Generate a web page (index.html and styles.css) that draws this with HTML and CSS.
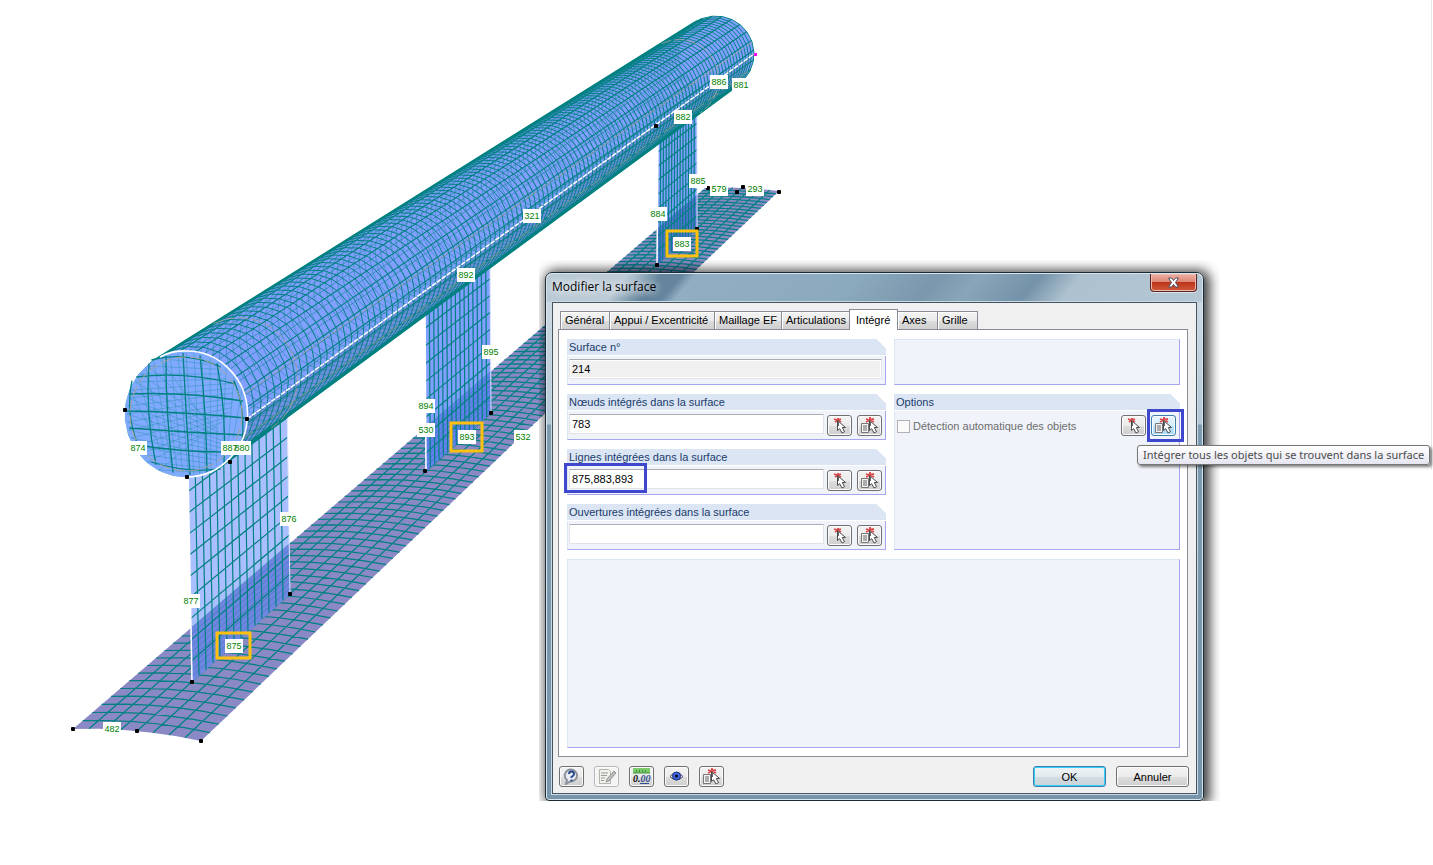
FILE: index.html
```html
<!DOCTYPE html>
<html lang="fr">
<head>
<meta charset="utf-8">
<title>Modifier la surface</title>
<link rel="stylesheet" href="styles.css">
</head>
<body>
<svg class="defs" width="0" height="0" aria-hidden="true">
  <symbol id="pick" viewBox="0 0 21 17">
    <path d="M5 2l3 1 4-1M6 5l3-2 3 2M9 1v3" stroke="#dc4a4a" stroke-width="1.800"/>
    <path d="M8.500 3.500v10l2.200-1.800 2.300 4.300 2.500-1.300-2.200-4.200h3.200z" fill="#fff" stroke="#4a4a4a"/>
    <path d="M9.500 4v5" stroke="#666"/>
  </symbol>
  <symbol id="picklist" viewBox="0 0 21 17">
    <path d="M2.500 6.500h7v9h-7z" fill="#f4f4f4" stroke="#777"/>
    <path d="M4 9h4M4 11h4M4 13h4" stroke="#666"/>
    <path d="M7 2l3 1 5-1M7 5l4-2 4 2M11 0v4" stroke="#dc4a4a" stroke-width="1.800"/>
    <path d="M10.500 3.500v10l2.200-1.800 2.300 4.300 2.500-1.300-2.200-4.200h3.200z" fill="#fff" stroke="#4a4a4a"/>
    <path d="M11.500 4v5" stroke="#666"/>
  </symbol>
</svg>
<main class="stage">
  <svg class="model" id="model" viewBox="0 0 800 800" role="img" aria-label="Maillage du modèle"></svg>

  <section class="dialog" role="dialog" aria-labelledby="title">
    <header class="titlebar">
      <h1 id="title">Modifier la surface</h1>
      <button class="close" aria-label="Fermer"><svg width="13" height="11" viewBox="0 0 13 11"><path d="M1.500 1h3l2 2.500 2-2.500h3L8.500 5.500l3 4.500h-3l-2-2.500-2 2.500h-3l3-4.500z" fill="#fff" stroke="#4b5063"/></svg></button>
    </header>
    <div class="client">
      <nav class="tabs" role="tablist">
        <button class="tab" role="tab">Général</button>
        <button class="tab" role="tab">Appui / Excentricité</button>
        <button class="tab" role="tab">Maillage EF</button>
        <button class="tab" role="tab">Articulations</button>
        <button class="tab active" role="tab" aria-selected="true">Intégré</button>
        <button class="tab short" role="tab">Axes</button>
        <button class="tab short" role="tab">Grille</button>
      </nav>
      <div class="panel">
        <div class="group">
          <label class="head" for="f1">Surface n°</label>
          <div class="row"><input class="field" id="f1" value="214" readonly></div>
        </div>
        <div class="box"></div>
        <div class="group">
          <label class="head" for="f2">Nœuds intégrés dans la surface</label>
          <div class="row"><input class="field" id="f2" value="783">
            <button class="tool" aria-label="Sélectionner"><svg><use href="#pick"/></svg></button>
            <button class="tool" aria-label="Liste"><svg><use href="#picklist"/></svg></button></div>
        </div>
        <div class="group options">
          <div class="head">Options</div>
          <div class="row">
            <input class="check" type="checkbox" id="auto" disabled><label class="muted" for="auto">Détection automatique des objets</label>
            <button class="tool" aria-label="Sélectionner"><svg><use href="#pick"/></svg></button>
            <button class="tool hot" aria-label="Intégrer tous les objets" aria-describedby="tip"><svg><use href="#picklist"/></svg></button>
          </div>
        </div>
        <div class="group marked">
          <label class="head" for="f3">Lignes intégrées dans la surface</label>
          <div class="row"><input class="field" id="f3" value="875,883,893">
            <button class="tool" aria-label="Sélectionner"><svg><use href="#pick"/></svg></button>
            <button class="tool" aria-label="Liste"><svg><use href="#picklist"/></svg></button></div>
        </div>
        <div class="group">
          <label class="head" for="f4">Ouvertures intégrées dans la surface</label>
          <div class="row"><input class="field" id="f4" value="">
            <button class="tool" aria-label="Sélectionner"><svg><use href="#pick"/></svg></button>
            <button class="tool" aria-label="Liste"><svg><use href="#picklist"/></svg></button></div>
        </div>
        <div class="box large"></div>
      </div>
      <footer class="footer">
        <button class="tool" aria-label="Aide"><svg viewBox="0 0 21 17"><path d="M10 1.500a6.500 6 0 1 1-1 12L5 16l1-4A6.500 6 0 0 1 10 1.500z" fill="#e9edf3" stroke="#8b929c" stroke-width="2"/><path d="M8 6q0-2.500 2.500-2.500T13 6q0 1.500-2.500 3v1M10.500 11.500v2" fill="none" stroke="#2b4a8c" stroke-width="2"/></svg></button>
        <button class="tool" aria-label="Commentaire" disabled><svg viewBox="0 0 21 17"><path d="M3.500 1.500h9l2 2v12h-11z" fill="#f1f1ec" stroke="#b4b4ac"/><path d="M5 5h7M5 7.500h6M5 10h4M5 12.500h3" stroke="#999"/><path d="M18 3l-7 8-1 3 3-1 7-8z" fill="#bbb" stroke="#999"/></svg></button>
        <button class="tool" aria-label="Unités"><svg viewBox="0 0 21 17"><path d="M2 0h17v5H2z" fill="#7ccb6b"/><path d="M5.500 2v2M8.500 2v2M11.500 2v2M14.500 2v2M2 5h17" stroke="#3b8f3b"/><path d="M9 15.500h9" stroke="#35518c"/><text x="2" y="14" font-size="10" font-weight="bold" font-style="italic" font-family="Liberation Serif, serif">0.<tspan fill="#35518c">00</tspan></text></svg></button>
        <button class="tool" aria-label="Vue"><svg viewBox="0 0 21 17"><path d="M4 8.500q6.500-8 13 0-6.500 7-13 0z" fill="#eef" stroke="#445" stroke-width="1"/><circle cx="10.500" cy="8" r="4" fill="#4068e0" stroke="#203080"/><circle cx="10.500" cy="8" r="1.500" fill="#001"/></svg></button>
        <button class="tool" aria-label="Liste"><svg><use href="#picklist"/></svg></button>
        <span class="spacer"></span>
        <button class="push default">OK</button>
        <button class="push">Annuler</button>
      </footer>
    </div>
  </section>
  <div class="tooltip" id="tip" role="tooltip">Intégrer tous les objets qui se trouvent dans la surface</div>
</main>
<script src="model.js"></script>
</body>
</html>
```

FILE: styles.css
```css
*, *::before, *::after { box-sizing: border-box; }
body { margin: 0; background: #fff; font: 11px "Liberation Sans", Arial, sans-serif; color: #000; }
button, input { font: inherit; color: inherit; margin: 0; }
.defs { position: absolute; }
.stage { position: relative; min-height: 860px; overflow: hidden; }
.stage::after { content: ""; position: absolute; top: 0; right: 1px; width: 1px; height: 470px; background: #e8e8e8; }
.model { display: block; width: 800px; }

.dialog {
  position: absolute; left: 545px; top: 272px; width: 659px;
  padding: 0 6px 6px; border: 1px solid #1c2a33; border-radius: 7px 7px 4px 4px;
  background: linear-gradient(#d2dde6 0, #b4c7d5 150px, #b4c7d5 151px, #7e9bb0 152px, #7795aa);
  box-shadow: inset 0 0 0 1px #d6e5ef, 3px 1px 12px 3px rgba(0, 0, 0, .75);
  clip-path: inset(-12px -16px 0 -6px);
}
.titlebar {
  display: flex; justify-content: space-between; align-items: flex-start; height: 28px; margin: 1px -5px 0;
  border-radius: 6px 6px 0 0;
  background: linear-gradient(130deg, #b9c9d5 0, #bccbd6 12%, #64859d 17%, #64859d 20%, #91adc2 22%, #8caabe 46%, #7a97ad 58%, #89a5b9 64%, #7492a9 73%, #adc1cf 79%, #b5c7d4);
}
.titlebar h1 { margin: 0; padding: 0 5px; font: 12px/26px "Open Sans", "Noto Sans", sans-serif; text-shadow: 0 0 8px #fff, 0 0 8px #fff; }
.close {
  width: 47px; height: 18px; margin-right: 5px; padding: 0; display: grid; place-items: center;
  border: 1px solid #5a2320; border-top: 0; border-radius: 0 0 4px 4px;
  background: linear-gradient(#efb1a4, #dd8777 45%, #bd3419 50%, #cf5b3b);
  box-shadow: inset 0 0 0 1px #eeb9ae, 0 1px #d9e3eb;
}
.client { padding: 6px 8px 6px 5px; border: 1px solid #45545e; outline: 1px solid #c9dae4; background: #f0f0f0; }
.tabs { display: flex; align-items: flex-end; height: 20px; padding-left: 2px; }
.tab {
  height: 18px; padding: 0 4px; white-space: nowrap; text-align: left; line-height: 17px;
  border: 1px solid #898c95; border-bottom: 0; margin-right: -1px;
  background: linear-gradient(#f3f3f3, #ebebeb 50%, #dcdcdc 51%, #d0d0d0); box-shadow: inset 1px 1px #fff;
}
.tab:nth-child(1) { width: 50px; }
.tab:nth-child(2) { width: 106px; }
.tab:nth-child(3) { width: 68px; }
.tab:nth-child(4) { width: 69px; }
.tab.short { width: 41px; }
.tab.active { width: 49px; height: 21px; margin-bottom: -1px; padding-left: 6px; line-height: 18px; background: #fff; z-index: 1; }
.panel {
  display: grid; grid-template-columns: 319fr 286fr; gap: 9px 8px; padding: 9px 7px 8px 8px;
  grid-template-rows: repeat(4, 46px) 189px;
  border: 1px solid #898c95; background: #fff;
}
.group, .box { border: 1px solid #dbe5f4; border-right-color: #a6a6ee; border-bottom-color: #a6a6ee; background: #f0f3f9; min-width: 0; }
.group { border-top: 0; position: relative; }
.group.options { grid-row: 2 / span 3; grid-column: 2; }
.box.large { grid-column: 1 / -1; }
.head {
  display: block; height: 17px; margin: 0 -1px; padding-left: 2px; line-height: 17px; color: #1a3b6c;
  background: linear-gradient(225deg, #fff 7px, #dbe5f4 7px); border-bottom: 1px solid #fff;
}
.row { display: flex; align-items: flex-start; gap: 5px; padding: 3px 3px 0 1px; }
.field { flex: 1; min-width: 0; height: 20px; padding: 0 2px; border: 1px solid #e2e3ea; border-top-color: #abadb3; border-radius: 1px; background: #fff; margin-right: -2px; }
.field[readonly] { background: #f0f0f0; box-shadow: inset 0 0 0 1px #fff; margin-right: 0; }
.tool {
  display: grid; place-items: center; flex: none; width: 25px; height: 21px; padding: 0; margin-top: 1px;
  border: 1px solid #707070; border-radius: 3px; background: linear-gradient(#f3f3f3, #ebebeb 50%, #ddd 51%, #cfcfcf); box-shadow: inset 0 0 0 1px #fbfbfb;
}
.tool svg { display: block; width: 21px; height: 17px; fill: none; }
.tool svg text { fill: #111; }
.tool:disabled { border-color: #b5b8bb; background: #f4f4f4; }
.tool.hot { position: relative; border-color: #3c7fb1; background: linear-gradient(#e8f5fc, #d5eefc 50%, #bce4fa 51%, #a7d9f5); }
.tool.hot::after { content: ""; position: absolute; inset: -7px -9px -7px -5px; border: 3px solid #3f48cc; }
.marked::after { content: ""; position: absolute; left: -4px; top: 14px; width: 83px; height: 30px; border: 3px solid #3f48cc; }
.check { appearance: none; width: 13px; height: 13px; margin: 6px 0 0 1px; border: 1px solid #b1b1b1; background: #fafafa; }
.muted { flex: 1; margin-left: -2px; line-height: 25px; color: #6d6d6d; white-space: nowrap; }
.footer { display: flex; align-items: center; gap: 10px; margin-right: -1px; padding: 9px 0 0 1px; }
.footer .tool { margin: 0; }
.spacer { flex: 1; }
.push { width: 73px; height: 21px; padding: 0; border: 1px solid #707070; border-radius: 3px; background: linear-gradient(#f3f3f3, #ebebeb 50%, #ddd 51%, #cfcfcf); box-shadow: inset 0 0 0 1px #fbfbfb; }
.push.default { border-color: #3c7fb1; box-shadow: inset 0 0 0 1px #34d0f5; background: linear-gradient(#eef3f5, #e3eaee 50%, #d2dce1 51%, #c8d4db); }
.tooltip {
  position: absolute; left: 1137px; top: 445px; padding: 0 5px; border: 1px solid #767676; border-radius: 3px;
  font: 11px/18px "Noto Sans", "Open Sans", sans-serif; color: #4c4c4c; white-space: nowrap;
  background: linear-gradient(#fff, #e4e5f0); box-shadow: 2px 2px 3px rgba(0, 0, 0, .5); z-index: 2;
}
.model text { font: 9px "Liberation Sans", Arial, sans-serif; fill: #008000; text-anchor: middle; }
```

FILE: model.js
```js
const svg = document.getElementById('model');
const TEAL = '#008080';

function add(tag, attrs, text) {
  const el = document.createElementNS('http://www.w3.org/2000/svg', tag);
  for (const k in attrs) el.setAttribute(k, attrs[k]);
  if (text) el.textContent = text;
  svg.appendChild(el);
}
const fmt = p => p[0].toFixed(1) + ' ' + p[1].toFixed(1);
const poly = pts => 'M' + pts.map(fmt).join('L');
const mix = (a, b, t) => [a[0] + (b[0] - a[0]) * t, a[1] + (b[1] - a[1]) * t];
const line = (d, color, width, opacity = 1, extra = {}) =>
  add('path', { d, fill: 'none', stroke: color, 'stroke-width': width, 'stroke-opacity': opacity, ...extra });
const fill = (pts, color, opacity = 1) => add('path', { d: poly(pts) + 'Z', fill: color, 'fill-opacity': opacity });
// Foreshortened position of step t for a far/near size ratio of 1:(1+k)
const depth = (t, k) => (1 - 1 / (1 + k * t)) * (1 + k) / k;

// Base plate
const left = [[73, 729], [705, 188]], right = [[201, 741], [779, 191]];
const plate = (u, v) => {
  const p = mix(mix(left[0], left[1], u), mix(right[0], right[1], u), v);
  p[1] -= 4 * (1 - u * .6) * 4 * v * (1 - v);
  return p;
};
const across = u => [0, .2, .4, .6, .8, 1].map(v => plate(u, v));
fill([...across(0), ...across(1).reverse()], '#8a89c6');
let d = '';
for (let i = 1; i < 112; i++) {
  const u = depth(i / 112, .73);
  d += poly(across(u));
}
for (let j = 1; j < 8; j++) d += poly([0, .25, .5, .75, 1].map(u => plate(u, j / 8)));
line(d, TEAL, 1.2);

// Columns: top-left, top-right, bottom-left, bottom-right
const columns = [
  { q: [[188, 470], [287, 398], [192, 682], [290, 594]], n: 14, m: 10, c: '#aabfff', low: '#7084e2' },
  { q: [[425, 310], [490, 262], [426, 471], [491, 413]], n: 15, m: 9, c: '#809fff', low: '#6480ee' },
  { q: [[658, 138], [697, 110], [657, 265], [697, 229]], n: 14, m: 9, c: '#809fff', low: '#5a70dc' }
];
const plateY = x => 729 - .856 * (x - 73);
for (const { q: [a, b, e, f], n, m, c, low } of columns) {
  fill([a, b, f, e], c);
  fill([[e[0], plateY(e[0])], [f[0], plateY(f[0])], f, e], low);
  let g = '';
  for (let i = 1; i < n; i++) g += poly([mix(a, b, i / n), mix(e, f, i / n)]);
  for (let j = 1; j < m; j++) g += poly([mix(a, e, j / m), mix(b, f, j / m)]);
  line(g, TEAL, 1.2);
  let h = '';
  for (let j = 0; j < 9; j++) {
    const t = j / 9;
    h += poly([mix([e[0], plateY(e[0])], e, t), mix([f[0], plateY(f[0])], f, t)]);
  }
  line(h, TEAL, 1, .35);
  line(poly([a, e]), '#fff', 1.5);
  line(poly([b, f]), '#dfe6ff', 1);
}

// Tube
const ring = (u, deg) => {
  const r = deg * Math.PI / 180;
  return [186 + 530 * u + (61 - 23 * u) * Math.cos(r), 414 - 360 * u + (63 - 25 * u) * Math.sin(r)];
};
const arc = (u, from, to) => {
  const pts = [];
  for (let k = 0; k <= 12; k++) pts.push(ring(u, from + (to - from) * k / 12));
  return pts;
};
const UP = -126, DOWN = 58;
fill([...arc(0, UP, UP - 176), ...arc(1, DOWN, UP)], '#809fff');
fill([ring(0, 5), ring(1, 0), ring(1, DOWN), ring(0, DOWN)], '#5f7fc4', .55);
let front = '', back = '';
for (let i = 0; i <= 116; i++) {
  const u = depth(i / 116, .63);
  front += poly(arc(u, UP, DOWN));
  back += poly(arc(u, UP, UP - 176));
}
line(back, TEAL, 1, .42);
line(front, TEAL, 1, .95);
let along = '', hidden = '';
for (let k = 0; k < 24; k++) {
  const a = UP + k * 15;
  if (a < DOWN) along += poly([ring(0, a), ring(1, a)]);
  else hidden += poly([ring(0, a), ring(1, a)]);
}
line(hidden, TEAL, 1, .5);
line(along, TEAL, 1.1);
for (const a of [UP + 3, UP + 8, UP + 14, DOWN - 3, DOWN - 9, DOWN - 15]) line(poly([ring(0, a), ring(1, a)]), TEAL, 2, .75);
for (const a of [-18, 24]) line(poly([ring(0, a), ring(1, a)]), '#a8a39c', 1, .8, { 'stroke-dasharray': '14 4' });
for (const u of [.1, .93]) line(poly(arc(u, UP + 10, DOWN)), '#a8a39c', 1, .8, { 'stroke-dasharray': '10 3' });
line(poly([[247, 419], [754, 54]]), '#fff', 1.5, 1, { 'stroke-dasharray': '5 1' });

// Front cap
add('ellipse', { cx: 186, cy: 414, rx: 61, ry: 63, fill: '#7faaff' });
let cap = '', ghost = '';
const half = (s, r1, r2) => r1 * Math.sqrt(1 - (s / r2) ** 2);
for (let i = -3; i <= 3; i++) {
  const s = i * 17, w = half(s, 59, 63), h = half(s, 61, 61);
  cap += `M${186 - w} ${414 + s - 3}Q186 ${414 + s * 1.2 - 2} ${186 + w} ${414 + s + 4}`;
  cap += `M${186 + s - 3} ${414 - h}Q${186 + s * 1.2} 414 ${186 + s + 4} ${414 + h}`;
}
for (let i = -7; i <= 7; i++) {
  const s = i * 8, w = half(s, 59, 63), h = half(s, 61, 61);
  ghost += `M${186 + s} ${414 - h}L${186 + s * .7 + 8} ${414 + h}`;
  ghost += `M${186 - w} ${414 + s}L${186 + w * .8} ${414 + s * .6 - 16}`;
  ghost += `M${186 - w} ${414 + s}L${186 + w * .6} ${414 + s * .5 + 30}`;
}
line(ghost, TEAL, 1, .28);
line(cap, TEAL, 1.3);
add('ellipse', { cx: 186, cy: 414, rx: 56, ry: 57, fill: 'none', stroke: '#a8a39c', 'stroke-dasharray': '11 4' });
line('M160 357Q173 350 186 351A61 63 0 0 1 187 477', '#fff', 1.6);

// Nodes
const nodes = [[73, 729], [137, 731], [201, 741], [192, 682], [290, 594], [125, 410], [247, 419], [187, 477], [230, 462],
  [425, 471], [491, 413], [657, 265], [697, 229], [656, 126], [708, 188], [743, 187], [737, 192], [779, 192]];
for (const [x, y] of nodes) add('rect', { x: x - 2, y: y - 2, width: 4, height: 4, rx: 1, fill: '#000' });
add('rect', { x: 754, y: 53, width: 3, height: 3, fill: '#f0f' });

// Line numbers
const labels = [[877, 191, 601], [875, 234, 646], [482, 112, 729], [876, 289, 519], [874, 138, 448], [887, 230, 448], [880, 242, 448],
  [530, 426, 430], [894, 426, 406], [893, 467, 437], [895, 491, 352], [532, 523, 437], [892, 466, 275], [321, 532, 216],
  [882, 683, 117], [886, 719, 82], [881, 741, 85], [885, 698, 181], [884, 658, 214], [883, 682, 244], [579, 719, 189], [293, 755, 189]];
for (const [n, x, y] of labels) add('rect', { x: x - 9, y: y - 7, width: 18, height: 14, fill: '#fff' });
for (const [n, x, y] of labels) add('text', { x, y: y + 3 }, String(n));
for (const [x, y, w, h] of [[217, 633, 33, 25], [451, 423, 31, 28], [667, 231, 30, 25]])
  add('rect', { x, y, width: w, height: h, fill: 'none', stroke: '#fec10d', 'stroke-width': 3 });
```
